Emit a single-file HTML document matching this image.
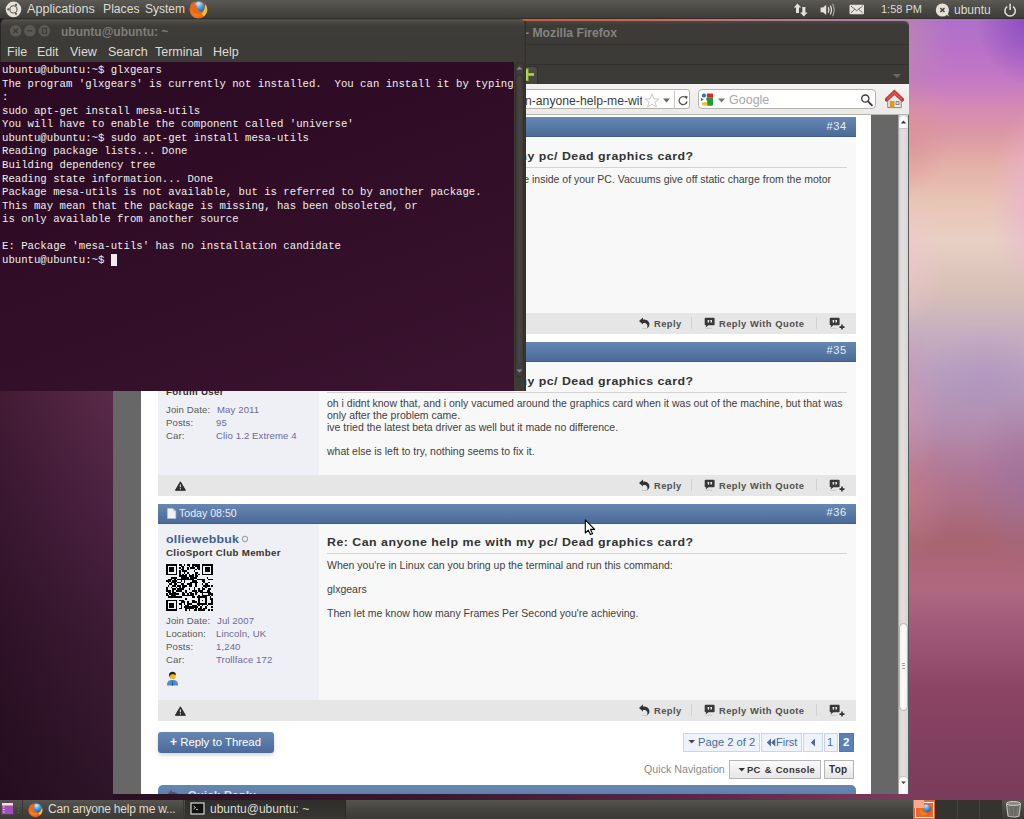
<!DOCTYPE html>
<html><head><meta charset="utf-8">
<style>
*{margin:0;padding:0;box-sizing:border-box}
html,body{width:1024px;height:819px;overflow:hidden}
body{position:relative;font-family:"Liberation Sans",sans-serif;background:#7a3a5c}
.a{position:absolute;white-space:nowrap}
#wall{left:0;top:0;width:1024px;height:819px;
background:
 radial-gradient(ellipse 55px 70px at 1030px 15px, rgba(128,64,190,.8), rgba(128,64,190,0) 100%),
 radial-gradient(ellipse 45px 70px at 905px 45px, rgba(190,134,178,.85), rgba(190,134,178,0) 100%),
 radial-gradient(ellipse 45px 60px at 905px 135px, rgba(218,146,150,.7), rgba(222,150,150,0) 100%),
 radial-gradient(ellipse 40px 90px at 1030px 200px, rgba(234,176,212,.75), rgba(234,176,212,0) 100%),
 radial-gradient(ellipse 40px 70px at 905px 260px, rgba(240,196,208,.6), rgba(240,196,208,0) 100%),
 radial-gradient(ellipse 70px 60px at 985px 385px, rgba(170,140,190,.4), rgba(170,140,190,0) 100%),
 radial-gradient(ellipse 40px 80px at 905px 400px, rgba(210,150,176,.6), rgba(210,150,176,0) 100%),
 radial-gradient(ellipse 60px 90px at 1030px 480px, rgba(152,112,160,.6), rgba(152,112,160,0) 100%),
 radial-gradient(ellipse 50px 70px at 905px 490px, rgba(198,128,136,.6), rgba(198,128,136,0) 100%),
 linear-gradient(180deg,#b070c8 20px,#b872c8 50px,#c478c4 80px,#d488b4 105px,#dc98a4 135px,#e4b0a8 165px,#e8c4b4 200px,#e8d0c4 240px,#d8c0b8 290px,#c8b0c0 330px,#b8a0c0 375px,#b490b0 420px,#b07898 470px,#a86470 540px,#b06880 590px,#a05a78 630px,#8c4464 690px,#7e3e5e 760px,#7a3c5c 800px);
}
#wallL{left:0;top:385px;width:113px;height:415px;background:linear-gradient(90deg,rgba(20,0,14,.35),rgba(20,0,14,0)),linear-gradient(180deg,#5c2a4a 0%,#4c2242 30%,#3c1a34 60%,#2e1428 100%)}
#wallB{left:113px;top:790px;width:796px;height:10px;background:linear-gradient(90deg,#2a1024,#3a1830 40%,#5a2a48 75%,#7a3c5c)}
#toppanel{left:0;top:0;width:1024px;height:18px;box-shadow:0 1px 0 #302f2b;background:linear-gradient(#5a5954,#4a4944 50%,#3d3c38);color:#dfdbd2;font-size:12.6px}
#botpanel{left:0;top:800px;width:1024px;height:19px;background:linear-gradient(#55544f,#45443f 50%,#3a3935);color:#dfdbd2;font-size:12.5px}
.pt{position:absolute;top:2px;white-space:nowrap}
/* firefox */
#ff{left:113px;top:21px;width:796px;height:773px;background:linear-gradient(#4a4944,#3c3b37 4px);border-radius:5px 5px 0 0;overflow:hidden}
#clip{left:0;top:0;width:1024px;height:819px;clip-path:inset(115px 115px 25px 113px)}
.ph{height:20px;background:linear-gradient(#6787b3,#4b6a99);border-bottom:1px solid #3f5d8a}
.pnum{color:#e8eef6;font-size:11px;letter-spacing:.6px}
.ttl{font-weight:bold;font-size:11.3px;color:#333;letter-spacing:.45px;word-spacing:0;transform:scaleX(1.094);transform-origin:0 0}
.txt{font-size:10.5px;color:#404040;line-height:12px}
.ft{height:21px;background:#e6e6e6}
.fb{font-weight:bold;font-size:9.4px;color:#505050;letter-spacing:.4px;word-spacing:.5px}
.lbl{font-size:9.6px;color:#5a5a5a;letter-spacing:.1px}
.val{font-size:9.6px;color:#6a6a9a;letter-spacing:.1px}
/* terminal */
#term{left:0;top:19px;width:525px;height:372px;background:transparent;overflow:hidden}
#termc{left:0;top:43px;width:514px;height:329px;background:linear-gradient(160deg,#2c0a22 0%,#300c26 40%,#3a1430 100%);color:#eeeeec;font-family:"Liberation Mono",monospace;font-size:10.67px;line-height:13.57px;white-space:pre;padding:2px 0 0 2px}
</style></head><body>
<div id="wall" class="a"></div>
<div id="wallL" class="a"></div>
<div id="wallB" class="a"></div>
<div class="a" style="left:0;top:18px;width:12px;height:12px;background:#2c0c26"></div>
<div class="a" style="left:500px;top:18px;width:415px;height:4px;background:linear-gradient(90deg,#c85a3a,#c8684a 30%,#b87890 70%,#b480a8)"></div>

<div id="ff" class="a">
  <div class="a" style="left:0;top:23px;width:796px;height:1px;background:#33322e"></div>
  <div class="a" style="left:0;top:43px;width:796px;height:1px;background:#33322e"></div>
  <div class="a" style="left:412px;top:5px;font-weight:bold;font-size:12.2px;color:#85837d">- Mozilla Firefox</div>
  <div class="a" style="left:0;top:63px;width:796px;height:31px;background:linear-gradient(#f4f3f1,#eceae7);border-bottom:1px solid #b9b7b1"></div>
  <div class="a" style="left:400px;top:44.5px;width:25px;height:18px;border-radius:4px 4px 0 0;background:linear-gradient(#4e4d48,#45443f);border:1px solid #32312d;border-bottom:0"></div>
  <svg class="a" style="left:412px;top:47px" width="12" height="14" viewBox="0 0 12 14"><path d="M0.5 0.5 H3.5 V5 H9 V8 H3.5 V13 H0.5 Z" fill="#8fbf2a"/><path d="M1.2 1.5 H2.5 V12 H1.2Z" fill="#c4e46a"/><path d="M3.5 5.8 H8.5 V6.8 H3.5Z" fill="#c4e46a"/></svg>
  <svg class="a" style="left:779px;top:51px" width="10" height="8" viewBox="0 0 10 8"><path d="M1 2 H9 L5 6Z" fill="#6a6965"/></svg>
  <!-- url bar -->
  <div class="a" style="left:380px;top:68.4px;width:197px;height:19.4px;background:#fff;border:1px solid #b4b2ac;border-radius:3px"></div>
  <div class="a" style="left:561px;top:69.5px;width:1px;height:18px;background:#c8c6c0"></div>
  <div class="a" style="left:412px;top:73px;width:117px;overflow:hidden;font-size:12.2px;color:#3c3c3c">n-anyone-help-me-with-</div>
  <svg class="a" style="left:531px;top:72px" width="16" height="15" viewBox="0 0 16 15"><path d="M8 1 L10 5.8 L15 6 L11.1 9.2 L12.4 14 L8 11.3 L3.6 14 L4.9 9.2 L1 6 L6 5.8Z" fill="#fff" stroke="#c9c9c9" stroke-width="1"/></svg>
  <svg class="a" style="left:549px;top:76px" width="9" height="7" viewBox="0 0 9 7"><path d="M1 1.5 H8 L4.5 5.5Z" fill="#666"/></svg>
  <svg class="a" style="left:564px;top:73px" width="12" height="13" viewBox="0 0 12 13"><path d="M9.3 4.2 A4 4 0 1 0 10 7.5" fill="none" stroke="#5a5650" stroke-width="1.3"/><path d="M7.4 1.8 L10.6 2.2 L9.9 5.6Z" fill="#5a5650"/></svg>
  <!-- search -->
  <div class="a" style="left:585px;top:68.4px;width:178px;height:19.4px;background:#fff;border:1px solid #b4b2ac;border-radius:4px"></div>
  <svg class="a" style="left:587px;top:71px" width="16" height="16" viewBox="0 0 16 16">
    <ellipse cx="4" cy="3.6" rx="2.2" ry="2" fill="#2f6fd6"/><path d="M1 5.8 L3.8 7.4 L1 9Z" fill="#2f6fd6"/><ellipse cx="4.7" cy="11.8" rx="2.9" ry="1.9" fill="#f4c020"/>
    <path d="M7 1.6 H12.4 Q13 1.6 13 2.2 V5.8 H7Z" fill="#e0261c"/><path d="M6.2 5.8 H13 V12.6 Q13 13.8 11.8 13.8 H7.2 V10 Q7.2 8 6.2 7.4Z" fill="#1f9a3a"/>
  </svg>
  <svg class="a" style="left:604px;top:76px" width="9" height="7" viewBox="0 0 9 7"><path d="M1 1.5 H8 L4.5 5.5Z" fill="#777"/></svg>
  <div class="a" style="left:616px;top:72px;font-size:12.5px;color:#a8a8a8">Google</div>
  <svg class="a" style="left:747px;top:72px" width="14" height="14" viewBox="0 0 14 14"><circle cx="5.3" cy="5.6" r="3.6" fill="none" stroke="#3a3a3a" stroke-width="1.3"/><path d="M8 8.3 L12 12.3" stroke="#3a3a3a" stroke-width="1.8" stroke-linecap="round"/></svg>
  <!-- home -->
  <svg class="a" style="left:772px;top:68px" width="19" height="20" viewBox="0 0 19 20">
    <path d="M2.7 9.5 V18.6 H16.2 V9.5 L9.45 3.5Z" fill="#ececec" stroke="#858585" stroke-width="1"/>
    <path d="M1.6 10.6 L9.4 3.2 L17.2 10.6" fill="none" stroke="#c43a36" stroke-width="4" stroke-linecap="round"/>
    <path d="M2.4 10 L9.4 3.6 L16.4 10" fill="none" stroke="#de5a54" stroke-width="1.4" stroke-linecap="round"/>
    <rect x="4.8" y="12" width="4.7" height="6.6" fill="#d89a20"/>
    <rect x="11" y="12.6" width="3" height="3" fill="#c4e2ea" stroke="#6e6e6e" stroke-width=".8"/>
  </svg>
</div>

<div id="clip" class="a">
  <div class="a" style="left:113px;top:115px;width:785px;height:679px;background:#676767"></div>
  <div class="a" style="left:141px;top:115px;width:730px;height:679px;background:#fff"></div>
  <div class="a ph" style="left:158px;top:117px;width:698px"></div>
  <div class="a pnum" style="left:826.5px;top:120px">#34</div>
  <div class="a" style="left:158px;top:137px;width:161px;height:176px;background:#eff0f5"></div>
  <div class="a" style="left:319px;top:137px;width:537px;height:176px;background:#f8f8f8"></div>
  <div class="a ttl" style="left:327px;top:150px">Re: Can anyone help me with my pc/ Dead graphics card?</div>
  <div class="a" style="left:327px;top:167px;width:520px;height:1px;background:#d4d4d4"></div>
  <div class="a txt" style="right:193px;top:172.5px">e inside of your PC. Vacuums give off static charge from the motor</div>
  <div class="a ft" style="left:158px;top:313px;width:698px"></div>
  <svg class="a" style="left:175px;top:319px" width="12" height="11" viewBox="0 0 12 11"><path d="M5.4 0.8 L10.4 9.3 H0.4Z" fill="#2e2e2e" stroke="#2e2e2e" stroke-width="1" stroke-linejoin="round"/><path d="M5.4 3.4 V6.2 M5.4 7.2 V8.4" stroke="#e6e6e6" stroke-width="1.1"/></svg>
  <svg class="a" style="left:638px;top:317px" width="13" height="12" viewBox="0 0 13 12"><path d="M1 4 L5 0.6 V2.6 C9 2.4 11.8 4.6 11.4 8 C11.2 9.6 10.2 10.8 8.6 11.4 C9.6 10 9.8 8.6 9 7.4 C8.2 6.2 6.8 5.8 5 6 V7.6Z" fill="#333"/><path d="M4 11.5 H9" stroke="#bbb" stroke-width=".8"/></svg>
  <div class="a fb" style="left:654px;top:318px">Reply</div>
  <div class="a" style="left:691px;top:317px;width:1px;height:12px;background:#d2d2d2"></div>
  <svg class="a" style="left:704px;top:317px" width="12" height="12" viewBox="0 0 12 12"><path d="M1.5 0.8 H9.8 Q10.6 0.8 10.6 1.6 V7.4 Q10.6 8.2 9.8 8.2 H4.4 L1.6 10.6 L2.2 8.2 H1.5 Q0.7 8.2 0.7 7.4 V1.6 Q0.7 0.8 1.5 0.8Z" fill="#383838"/><path d="M3.6 3 h1.6 v1.8 l-1 1.2 h-.6 l.6-1.2 h-.6z M6.4 3 h1.6 v1.8 l-1 1.2 h-.6 l.6-1.2 h-.6z" fill="#eee"/><path d="M1.5 11.3 H8" stroke="#c4c4c4" stroke-width=".8"/></svg>
  <div class="a fb" style="left:719px;top:318px;">Reply With Quote</div>
  <div class="a" style="left:816px;top:317px;width:1px;height:12px;background:#d2d2d2"></div>
  <svg class="a" style="left:829px;top:317px" width="17" height="13" viewBox="0 0 17 13"><path d="M1.5 0.8 H9.8 Q10.6 0.8 10.6 1.6 V7.4 Q10.6 8.2 9.8 8.2 H4.4 L1.6 10.6 L2.2 8.2 H1.5 Q0.7 8.2 0.7 7.4 V1.6 Q0.7 0.8 1.5 0.8Z" fill="#383838"/><path d="M3.6 3 h1.6 v1.8 l-1 1.2 h-.6 l.6-1.2 h-.6z M6.4 3 h1.6 v1.8 l-1 1.2 h-.6 l.6-1.2 h-.6z" fill="#eee"/><path d="M1.5 11.3 H8" stroke="#c4c4c4" stroke-width=".8"/><path d="M13 7.6 V12.6 M10.5 10.1 H15.5" stroke="#333" stroke-width="1.6"/></svg>
  <div class="a ph" style="left:158px;top:342px;width:698px"></div>
  <div class="a pnum" style="left:826.5px;top:344px">#35</div>
  <div class="a" style="left:158px;top:362px;width:161px;height:113px;background:#eff0f5"></div>
  <div class="a" style="left:319px;top:362px;width:537px;height:113px;background:#f8f8f8"></div>
  <div class="a ttl" style="left:327px;top:375px">Re: Can anyone help me with my pc/ Dead graphics card?</div>
  <div class="a" style="left:327px;top:392px;width:520px;height:1px;background:#d4d4d4"></div>
  <div class="a" style="left:166px;top:386.5px;font-weight:bold;font-size:8.8px;letter-spacing:.3px;transform:scaleX(1.105);transform-origin:0 0;color:#3a3226">Forum User</div>
  <div class="a lbl" style="left:166px;top:404px">Join Date:</div><div class="a val" style="left:217px;top:404px">May 2011</div>
  <div class="a lbl" style="left:166px;top:417px">Posts:</div><div class="a val" style="left:216px;top:417px">95</div>
  <div class="a lbl" style="left:166px;top:430px">Car:</div><div class="a val" style="left:216px;top:430px">Clio 1.2 Extreme 4</div>
  <div class="a txt" style="left:327px;top:397px">oh i didnt know that, and i only vacumed around the graphics card when it was out of the machine, but that was<br>only after the problem came.<br>ive tried the latest beta driver as well but it made no difference.<br><br>what else is left to try, nothing seems to fix it.</div>
  <div class="a ft" style="left:158px;top:475px;width:698px"></div>
  <svg class="a" style="left:175px;top:481px" width="12" height="11" viewBox="0 0 12 11"><path d="M5.4 0.8 L10.4 9.3 H0.4Z" fill="#2e2e2e" stroke="#2e2e2e" stroke-width="1" stroke-linejoin="round"/><path d="M5.4 3.4 V6.2 M5.4 7.2 V8.4" stroke="#e6e6e6" stroke-width="1.1"/></svg>
  <svg class="a" style="left:638px;top:479px" width="13" height="12" viewBox="0 0 13 12"><path d="M1 4 L5 0.6 V2.6 C9 2.4 11.8 4.6 11.4 8 C11.2 9.6 10.2 10.8 8.6 11.4 C9.6 10 9.8 8.6 9 7.4 C8.2 6.2 6.8 5.8 5 6 V7.6Z" fill="#333"/><path d="M4 11.5 H9" stroke="#bbb" stroke-width=".8"/></svg>
  <div class="a fb" style="left:654px;top:480px">Reply</div>
  <div class="a" style="left:691px;top:479px;width:1px;height:12px;background:#d2d2d2"></div>
  <svg class="a" style="left:704px;top:479px" width="12" height="12" viewBox="0 0 12 12"><path d="M1.5 0.8 H9.8 Q10.6 0.8 10.6 1.6 V7.4 Q10.6 8.2 9.8 8.2 H4.4 L1.6 10.6 L2.2 8.2 H1.5 Q0.7 8.2 0.7 7.4 V1.6 Q0.7 0.8 1.5 0.8Z" fill="#383838"/><path d="M3.6 3 h1.6 v1.8 l-1 1.2 h-.6 l.6-1.2 h-.6z M6.4 3 h1.6 v1.8 l-1 1.2 h-.6 l.6-1.2 h-.6z" fill="#eee"/><path d="M1.5 11.3 H8" stroke="#c4c4c4" stroke-width=".8"/></svg>
  <div class="a fb" style="left:719px;top:480px;">Reply With Quote</div>
  <div class="a" style="left:816px;top:479px;width:1px;height:12px;background:#d2d2d2"></div>
  <svg class="a" style="left:829px;top:479px" width="17" height="13" viewBox="0 0 17 13"><path d="M1.5 0.8 H9.8 Q10.6 0.8 10.6 1.6 V7.4 Q10.6 8.2 9.8 8.2 H4.4 L1.6 10.6 L2.2 8.2 H1.5 Q0.7 8.2 0.7 7.4 V1.6 Q0.7 0.8 1.5 0.8Z" fill="#383838"/><path d="M3.6 3 h1.6 v1.8 l-1 1.2 h-.6 l.6-1.2 h-.6z M6.4 3 h1.6 v1.8 l-1 1.2 h-.6 l.6-1.2 h-.6z" fill="#eee"/><path d="M1.5 11.3 H8" stroke="#c4c4c4" stroke-width=".8"/><path d="M13 7.6 V12.6 M10.5 10.1 H15.5" stroke="#333" stroke-width="1.6"/></svg>
  <div class="a ph" style="left:158px;top:504px;width:698px"></div>
  <div class="a pnum" style="left:826.5px;top:506px">#36</div>
  <div class="a" style="left:158px;top:524px;width:161px;height:176px;background:#eff0f5"></div>
  <div class="a" style="left:319px;top:524px;width:537px;height:176px;background:#f8f8f8"></div>
  <div class="a ttl" style="left:327px;top:536px">Re: Can anyone help me with my pc/ Dead graphics card?</div>
  <div class="a" style="left:327px;top:553px;width:520px;height:1px;background:#d4d4d4"></div>
  <svg class="a" style="left:167px;top:508px" width="10" height="11" viewBox="0 0 10 11"><path d="M0.5 0.5 H6 L8.8 3.3 V10.5 H0.5Z" fill="#eef2f8" stroke="#b8c8dc" stroke-width=".6"/><path d="M6 0.5 V3.3 H8.8Z" fill="#b8c8dc"/></svg>
  <div class="a pnum" style="left:179px;top:507px;font-size:10.6px;letter-spacing:0">Today 08:50</div>
  <div class="a" style="left:166px;top:533px;font-size:11.5px;font-weight:bold;letter-spacing:.2px;transform:scaleX(1.075);transform-origin:0 0;color:#3f5e94">olliewebbuk</div>
  <svg class="a" style="left:241px;top:535px" width="8" height="8" viewBox="0 0 8 8"><circle cx="4" cy="4" r="2.6" fill="none" stroke="#a8a8b0" stroke-width="1.1"/></svg>
  <div class="a" style="left:166px;top:548px;font-weight:bold;font-size:8.8px;letter-spacing:.3px;transform:scaleX(1.105);transform-origin:0 0;color:#3a3226">ClioSport Club Member</div>
  <svg class="a" style="left:166px;top:564px" width="47" height="47" viewBox="0 0 29 29" shape-rendering="crispEdges"><path d="M0 0h7v1h-7zM8 0h2v1h-2zM11 0h1v1h-1zM13 0h2v1h-2zM16 0h5v1h-5zM22 0h7v1h-7zM0 1h1v1h-1zM6 1h1v1h-1zM9 1h2v1h-2zM14 1h1v1h-1zM16 1h1v1h-1zM18 1h3v1h-3zM22 1h1v1h-1zM28 1h1v1h-1zM0 2h1v1h-1zM2 2h3v1h-3zM6 2h1v1h-1zM8 2h1v1h-1zM10 2h1v1h-1zM13 2h1v1h-1zM15 2h3v1h-3zM19 2h2v1h-2zM22 2h1v1h-1zM24 2h3v1h-3zM28 2h1v1h-1zM0 3h1v1h-1zM2 3h3v1h-3zM6 3h1v1h-1zM9 3h2v1h-2zM13 3h1v1h-1zM18 3h1v1h-1zM20 3h1v1h-1zM22 3h1v1h-1zM24 3h3v1h-3zM28 3h1v1h-1zM0 4h1v1h-1zM2 4h3v1h-3zM6 4h1v1h-1zM8 4h1v1h-1zM10 4h3v1h-3zM17 4h1v1h-1zM22 4h1v1h-1zM24 4h3v1h-3zM28 4h1v1h-1zM0 5h1v1h-1zM6 5h1v1h-1zM8 5h1v1h-1zM11 5h1v1h-1zM13 5h1v1h-1zM18 5h2v1h-2zM22 5h1v1h-1zM28 5h1v1h-1zM0 6h7v1h-7zM8 6h1v1h-1zM10 6h1v1h-1zM12 6h1v1h-1zM14 6h1v1h-1zM16 6h1v1h-1zM18 6h1v1h-1zM20 6h1v1h-1zM22 6h7v1h-7zM8 7h5v1h-5zM14 7h3v1h-3zM18 7h2v1h-2zM3 8h4v1h-4zM9 8h5v1h-5zM15 8h4v1h-4zM25 8h1v1h-1zM1 9h3v1h-3zM5 9h1v1h-1zM7 9h10v1h-10zM19 9h5v1h-5zM26 9h3v1h-3zM0 10h3v1h-3zM4 10h3v1h-3zM9 10h1v1h-1zM11 10h1v1h-1zM16 10h3v1h-3zM22 10h2v1h-2zM1 11h1v1h-1zM3 11h3v1h-3zM7 11h2v1h-2zM11 11h1v1h-1zM15 11h5v1h-5zM23 11h1v1h-1zM26 11h1v1h-1zM2 12h2v1h-2zM5 12h2v1h-2zM9 12h2v1h-2zM13 12h3v1h-3zM18 12h1v1h-1zM22 12h1v1h-1zM24 12h2v1h-2zM1 13h1v1h-1zM4 13h2v1h-2zM7 13h2v1h-2zM10 13h3v1h-3zM14 13h2v1h-2zM18 13h1v1h-1zM23 13h4v1h-4zM28 13h1v1h-1zM0 14h1v1h-1zM3 14h1v1h-1zM6 14h1v1h-1zM8 14h1v1h-1zM10 14h2v1h-2zM17 14h1v1h-1zM22 14h1v1h-1zM24 14h1v1h-1zM0 15h1v1h-1zM4 15h2v1h-2zM7 15h4v1h-4zM14 15h1v1h-1zM17 15h1v1h-1zM20 15h1v1h-1zM22 15h2v1h-2zM26 15h2v1h-2zM0 16h3v1h-3zM4 16h1v1h-1zM6 16h4v1h-4zM12 16h1v1h-1zM16 16h3v1h-3zM20 16h3v1h-3zM25 16h2v1h-2zM1 17h2v1h-2zM4 17h2v1h-2zM10 17h1v1h-1zM12 17h1v1h-1zM14 17h2v1h-2zM18 17h2v1h-2zM21 17h7v1h-7zM0 18h1v1h-1zM2 18h6v1h-6zM10 18h2v1h-2zM13 18h1v1h-1zM15 18h2v1h-2zM18 18h1v1h-1zM22 18h1v1h-1zM26 18h3v1h-3zM0 19h2v1h-2zM3 19h3v1h-3zM10 19h7v1h-7zM20 19h1v1h-1zM22 19h5v1h-5zM28 19h1v1h-1zM1 20h9v1h-9zM16 20h2v1h-2zM19 20h6v1h-6zM27 20h1v1h-1zM12 21h1v1h-1zM20 21h1v1h-1zM24 21h1v1h-1zM27 21h2v1h-2zM0 22h7v1h-7zM8 22h3v1h-3zM16 22h2v1h-2zM20 22h1v1h-1zM22 22h1v1h-1zM24 22h1v1h-1zM28 22h1v1h-1zM0 23h1v1h-1zM6 23h1v1h-1zM9 23h3v1h-3zM13 23h1v1h-1zM16 23h3v1h-3zM20 23h1v1h-1zM24 23h1v1h-1zM28 23h1v1h-1zM0 24h1v1h-1zM2 24h3v1h-3zM6 24h1v1h-1zM8 24h2v1h-2zM11 24h1v1h-1zM13 24h3v1h-3zM19 24h6v1h-6zM26 24h3v1h-3zM0 25h1v1h-1zM2 25h3v1h-3zM6 25h1v1h-1zM9 25h1v1h-1zM12 25h2v1h-2zM16 25h3v1h-3zM20 25h1v1h-1zM22 25h1v1h-1zM25 25h1v1h-1zM0 26h1v1h-1zM2 26h3v1h-3zM6 26h1v1h-1zM9 26h1v1h-1zM11 26h9v1h-9zM21 26h1v1h-1zM24 26h1v1h-1zM28 26h1v1h-1zM0 27h1v1h-1zM6 27h1v1h-1zM8 27h2v1h-2zM12 27h5v1h-5zM18 27h1v1h-1zM20 27h2v1h-2zM23 27h2v1h-2zM0 28h7v1h-7zM12 28h1v1h-1zM14 28h1v1h-1zM17 28h2v1h-2zM20 28h4v1h-4zM26 28h1v1h-1zM28 28h1v1h-1z" fill="#000"/></svg>
  <div class="a lbl" style="left:166px;top:615px">Join Date:</div><div class="a val" style="left:217px;top:615px">Jul 2007</div>
  <div class="a lbl" style="left:166px;top:628px">Location:</div><div class="a val" style="left:216px;top:628px">Lincoln, UK</div>
  <div class="a lbl" style="left:166px;top:641px">Posts:</div><div class="a val" style="left:216px;top:641px">1,240</div>
  <div class="a lbl" style="left:166px;top:654px">Car:</div><div class="a val" style="left:216px;top:654px">Trollface 172</div>
  <svg class="a" style="left:166px;top:671px" width="13" height="15" viewBox="0 0 13 15"><path d="M1 14.5 C1 10 3 9 6.5 9 C10 9 12 10 12 14.5Z" fill="#4a8ad8"/><path d="M6.5 9.5 L5.8 14.5 H7.2Z" fill="#1a3a6a"/><circle cx="6.5" cy="5" r="3.3" fill="#f0b820"/><path d="M3 4.5 C3 1.5 5 0.8 6.5 0.8 C9 0.8 10 2.5 10 4 C9 3 7 3.2 5 3.5 C4.2 4 3.8 5 3.8 6Z" fill="#222"/></svg>
  <div class="a txt" style="left:327px;top:558.5px">When you're in Linux can you bring up the terminal and run this command:<br><br>glxgears<br><br>Then let me know how many Frames Per Second you're achieving.</div>
  <div class="a ft" style="left:158px;top:700px;width:698px"></div>
  <svg class="a" style="left:175px;top:706px" width="12" height="11" viewBox="0 0 12 11"><path d="M5.4 0.8 L10.4 9.3 H0.4Z" fill="#2e2e2e" stroke="#2e2e2e" stroke-width="1" stroke-linejoin="round"/><path d="M5.4 3.4 V6.2 M5.4 7.2 V8.4" stroke="#e6e6e6" stroke-width="1.1"/></svg>
  <svg class="a" style="left:638px;top:704px" width="13" height="12" viewBox="0 0 13 12"><path d="M1 4 L5 0.6 V2.6 C9 2.4 11.8 4.6 11.4 8 C11.2 9.6 10.2 10.8 8.6 11.4 C9.6 10 9.8 8.6 9 7.4 C8.2 6.2 6.8 5.8 5 6 V7.6Z" fill="#333"/><path d="M4 11.5 H9" stroke="#bbb" stroke-width=".8"/></svg>
  <div class="a fb" style="left:654px;top:705px">Reply</div>
  <div class="a" style="left:691px;top:704px;width:1px;height:12px;background:#d2d2d2"></div>
  <svg class="a" style="left:704px;top:704px" width="12" height="12" viewBox="0 0 12 12"><path d="M1.5 0.8 H9.8 Q10.6 0.8 10.6 1.6 V7.4 Q10.6 8.2 9.8 8.2 H4.4 L1.6 10.6 L2.2 8.2 H1.5 Q0.7 8.2 0.7 7.4 V1.6 Q0.7 0.8 1.5 0.8Z" fill="#383838"/><path d="M3.6 3 h1.6 v1.8 l-1 1.2 h-.6 l.6-1.2 h-.6z M6.4 3 h1.6 v1.8 l-1 1.2 h-.6 l.6-1.2 h-.6z" fill="#eee"/><path d="M1.5 11.3 H8" stroke="#c4c4c4" stroke-width=".8"/></svg>
  <div class="a fb" style="left:719px;top:705px;">Reply With Quote</div>
  <div class="a" style="left:816px;top:704px;width:1px;height:12px;background:#d2d2d2"></div>
  <svg class="a" style="left:829px;top:704px" width="17" height="13" viewBox="0 0 17 13"><path d="M1.5 0.8 H9.8 Q10.6 0.8 10.6 1.6 V7.4 Q10.6 8.2 9.8 8.2 H4.4 L1.6 10.6 L2.2 8.2 H1.5 Q0.7 8.2 0.7 7.4 V1.6 Q0.7 0.8 1.5 0.8Z" fill="#383838"/><path d="M3.6 3 h1.6 v1.8 l-1 1.2 h-.6 l.6-1.2 h-.6z M6.4 3 h1.6 v1.8 l-1 1.2 h-.6 l.6-1.2 h-.6z" fill="#eee"/><path d="M1.5 11.3 H8" stroke="#c4c4c4" stroke-width=".8"/><path d="M13 7.6 V12.6 M10.5 10.1 H15.5" stroke="#333" stroke-width="1.6"/></svg>

  <!-- bottom -->
  <div class="a" style="left:158px;top:732px;width:116px;height:21px;border-radius:3px;background:linear-gradient(#6787b3,#4b6a99);box-shadow:0 2px 4px rgba(0,0,0,.18);color:#fff;font-size:11.4px;padding:3px 0 0 12px;line-height:14px"><b style="font-size:12px">+</b> Reply to Thread</div>
  <!-- pagination -->
  <div class="a" style="left:683px;top:733px;width:77px;height:19px;background:#eef2fb;border:1px solid #c9d3ea"></div>
  <svg class="a" style="left:688px;top:739px" width="8" height="6" viewBox="0 0 8 6"><path d="M0.5 1 H7 L3.75 4.6Z" fill="#444"/></svg>
  <div class="a" style="left:698px;top:736px;font-size:11.2px;color:#4a6a98">Page 2 of 2</div>
  <div class="a" style="left:761px;top:733px;width:41px;height:19px;background:#eef2fb;border:1px solid #c9d3ea"></div>
  <svg class="a" style="left:766px;top:738px" width="10" height="9" viewBox="0 0 10 9"><path d="M5 0.5 V8.5 L0.8 4.5Z M9.3 0.5 V8.5 L5.1 4.5Z" fill="#4a6a98"/></svg>
  <div class="a" style="left:776px;top:736px;font-size:11px;color:#4a6a98">First</div>
  <div class="a" style="left:803px;top:733px;width:20px;height:19px;background:#eef2fb;border:1px solid #c9d3ea"></div>
  <svg class="a" style="left:810px;top:738px" width="6" height="9" viewBox="0 0 6 9"><path d="M5 0.5 V8.5 L0.8 4.5Z" fill="#4a6a98"/></svg>
  <div class="a" style="left:824px;top:733px;width:14px;height:19px;background:#eef2fb;border:1px solid #c9d3ea"></div>
  <div class="a" style="left:827px;top:736px;font-size:11px;color:#4a6a98">1</div>
  <div class="a" style="left:839px;top:733px;width:15px;height:19px;background:#5a80b9;border:1px solid #5077b0"></div>
  <div class="a" style="left:843px;top:735.5px;font-size:11.5px;font-weight:bold;color:#fff">2</div>
  <!-- quick nav -->
  <div class="a" style="left:644px;top:763px;font-size:10.7px;color:#8a8a8a">Quick Navigation</div>
  <div class="a" style="left:729px;top:760px;width:92px;height:19px;background:linear-gradient(#fafafa,#e6e6e6);border:1px solid #b5b5b5"></div>
  <svg class="a" style="left:738px;top:767px" width="8" height="6" viewBox="0 0 8 6"><path d="M0.5 1 H7 L3.75 4.6Z" fill="#333"/></svg>
  <div class="a" style="left:747px;top:764px;font-size:9.4px;letter-spacing:.35px;word-spacing:1px;font-weight:bold;color:#333">PC &amp; Console</div>
  <div class="a" style="left:824px;top:760px;width:30px;height:19px;background:linear-gradient(#fafafa,#e6e6e6);border:1px solid #b5b5b5"></div>
  <div class="a" style="left:829px;top:764px;font-size:10px;letter-spacing:.3px;font-weight:bold;color:#333">Top</div>
  <!-- quick reply -->
  <div class="a" style="left:158px;top:785px;width:698px;height:20px;border-radius:5px 5px 0 0;background:linear-gradient(#6787b3,#5676a5)"></div>
  <svg class="a" style="left:167px;top:789px" width="13" height="8" viewBox="0 0 13 8"><path d="M0.5 5 L5 0.8 V3 C8.5 3 11.5 4.5 12.5 8 H0.5Z" fill="#4e5663"/></svg>
  <div class="a" style="left:188px;top:788.5px;font-size:11px;font-weight:bold;letter-spacing:.4px;color:#dde5ef">Quick Reply</div>
  <!-- scrollbar -->
  <div class="a" style="left:898px;top:115px;width:11px;height:679px;background:linear-gradient(90deg,#d4d2cf,#e2e0de 40%,#d8d6d3);border-left:1px solid #a9a7a4;border-right:1px solid #5c5a57"></div>
  <div class="a" style="left:899px;top:116px;width:9px;height:13px;border-radius:5px 5px 2px 2px;background:linear-gradient(90deg,#f2f2f1,#fdfdfd 50%,#efefee);border-bottom:1px solid #c8c6c3"></div>
  <svg class="a" style="left:899px;top:118px" width="9" height="8" viewBox="0 0 9 8"><path d="M1.8 5.5 H7.2 L4.5 2.5Z" fill="#3a3a3a"/></svg>
  <div class="a" style="left:899px;top:623px;width:9px;height:88px;border-radius:5px;background:linear-gradient(90deg,#f2f2f1,#fdfdfd 50%,#efefee);border:1px solid #b3b1ae"></div>
  <div class="a" style="left:902px;top:663px;width:3px;height:6px;border-top:1px solid #a0a0a0;border-bottom:1px solid #a0a0a0"></div>
  <div class="a" style="left:902px;top:665px;width:3px;height:1px;background:#a0a0a0"></div>
  <div class="a" style="left:899px;top:776px;width:9px;height:18px;border-radius:5px 5px 0 0;background:linear-gradient(90deg,#f2f2f1,#fdfdfd 50%,#efefee);border-top:1px solid #c8c6c3"></div>
  <svg class="a" style="left:899px;top:780px" width="9" height="8" viewBox="0 0 9 8"><path d="M2.2 1.5 H6.8 L4.5 4Z" fill="#3a3a3a"/></svg>
</div>

<svg class="a" style="left:584px;top:519px;z-index:50" width="12" height="17" viewBox="0 0 12 17"><path d="M1.3 0.8 V14 L4.3 11.2 L6.4 15.6 L8.6 14.7 L6.5 10.4 H10.6 Z" fill="#fff" stroke="#000" stroke-width="1.1" stroke-linejoin="round"/></svg>

<div id="term" class="a">
  <div class="a" style="left:0;top:0;width:525px;height:23px;border-radius:5px 5px 0 0;background:linear-gradient(#3c3b37,#53524d 1px,#4a4944 3px,#3e3d39 7px,#3c3b37);border-left:1px solid #2a2927"></div>
  <svg class="a" style="left:0;top:0" width="60" height="23" viewBox="0 0 60 23">
    <circle cx="15.6" cy="11.8" r="5.8" fill="#5a5955"/><circle cx="29.9" cy="11.8" r="5.8" fill="#5a5955"/><circle cx="44.4" cy="11.8" r="5.8" fill="#5a5955"/>
    <path d="M13.4 9.6 L17.8 14 M17.8 9.6 L13.4 14" stroke="#3a3935" stroke-width="1.2"/>
    <path d="M27.5 11.8 H32.3" stroke="#3a3935" stroke-width="1.2"/>
    <rect x="42.4" y="9.3" width="4" height="5" fill="none" stroke="#3a3935" stroke-width="1"/>
  </svg>
  <div class="a" style="left:61px;top:6px;font-weight:bold;font-size:12px;color:#7f7d78">ubuntu@ubuntu: ~</div>
  <div class="a" style="left:0;top:23px;width:525px;height:20px;background:#3c3b37;border-left:1px solid #2a2927;color:#dfdbd2;font-size:12.5px;word-spacing:0">
    <span class="a" style="left:6px;top:3px">File</span><span class="a" style="left:36px;top:3px">Edit</span><span class="a" style="left:69px;top:3px">View</span><span class="a" style="left:107px;top:3px">Search</span><span class="a" style="left:154px;top:3px">Terminal</span><span class="a" style="left:212px;top:3px">Help</span>
  </div>
  <div id="termc" class="a">ubuntu@ubuntu:~$ glxgears
The program 'glxgears' is currently not installed.  You can install it by typing
:
sudo apt-get install mesa-utils
You will have to enable the component called 'universe'
ubuntu@ubuntu:~$ sudo apt-get install mesa-utils
Reading package lists... Done
Building dependency tree
Reading state information... Done
Package mesa-utils is not available, but is referred to by another package.
This may mean that the package is missing, has been obsoleted, or
is only available from another source

E: Package 'mesa-utils' has no installation candidate
ubuntu@ubuntu:~$ <span style="background:#eeeeec">&nbsp;</span></div>
  <div class="a" style="left:514px;top:43px;width:11px;height:329px;background:#3c3b37"></div>
  <div class="a" style="left:515px;top:43px;width:9px;height:12px;border-radius:5px 5px 0 0;background:#3f3e3a;border:1px solid #33322f;border-bottom:0"></div>
  <svg class="a" style="left:515px;top:46px" width="9" height="6" viewBox="0 0 9 6"><path d="M1.5 4.5 H7.5 L4.5 1.5Z" fill="#8a8984"/></svg>
  <div class="a" style="left:515px;top:55px;width:9px;height:292px;border-radius:5px;background:linear-gradient(90deg,#3a3935,#46453f 50%,#3c3b37);border:1px solid #302f2c"></div>
  <div class="a" style="left:515px;top:345px;width:9px;height:13px;border-radius:0 0 5px 5px;background:#3f3e3a;border:1px solid #33322f;border-top:0"></div>
  <svg class="a" style="left:515px;top:349px" width="9" height="6" viewBox="0 0 9 6"><path d="M1.5 1.5 H7.5 L4.5 4.5Z" fill="#8a8984"/></svg>
</div>

<div class="a" style="left:524px;top:21px;width:2px;height:370px;background:linear-gradient(90deg,#3a3935,#2e2d2a)"></div>
<div id="toppanel" class="a">
  <svg class="a" style="left:0;top:0" width="24" height="19" viewBox="0 0 24 19">
    <circle cx="13.5" cy="9.4" r="7.8" fill="#e6e2da"/>
    <circle cx="13.4" cy="9.4" r="3.6" fill="none" stroke="#5a5853" stroke-width="1.1"/>
    <circle cx="8.3" cy="9.4" r="1.15" fill="#5a5853"/><circle cx="16" cy="5" r="1.15" fill="#5a5853"/><circle cx="16" cy="13.8" r="1.15" fill="#5a5853"/>
  </svg>
  <svg class="a" style="left:188px;top:0" width="21" height="19" viewBox="0 0 21 19">
    <defs><radialGradient id="fxo" cx="0.4" cy="0.6" r="0.65"><stop offset="0" stop-color="#f8a020"/><stop offset="0.55" stop-color="#ec6a1c"/><stop offset="1" stop-color="#c8401a"/></radialGradient>
    <radialGradient id="fxb" cx="0.45" cy="0.2" r="0.85"><stop offset="0" stop-color="#c8f0ff"/><stop offset="0.45" stop-color="#4aa0e0"/><stop offset="1" stop-color="#1a4a98"/></radialGradient></defs>
    <circle cx="10.4" cy="9.6" r="8.9" fill="url(#fxo)"/>
    <path d="M17.6 4.5 A8.8 8.8 0 0 1 15.5 16.8 L13.5 13 Z" fill="#f6c030"/>
    <circle cx="11" cy="7.2" r="5.7" fill="url(#fxb)"/>
    <path d="M2.4 5.5 C3.5 2.5 6 1.5 8.2 2.2 C7 3.4 6.6 4.5 6.9 5.6 C8 5 9 5.4 8.8 6.3 C8.6 8.5 9.5 10.4 11.5 11.2 C13.2 11.8 14.8 11.4 16 10.4 C15 13.4 12 14.8 9 14.2 C5 13.4 2 10 2.4 5.5Z" fill="#e8681a"/>
  </svg>
  <span class="pt" style="left:27px">Applications</span>
  <span class="pt" style="left:103px;font-size:12.2px;top:2px">Places</span>
  <span class="pt" style="left:145px;font-size:12px;top:2px">System</span>
  <svg class="a" style="left:790px;top:0" width="50" height="19" viewBox="0 0 50 19">
    <path d="M7.5 3.5 L3.8 7.6 H6 V13 H9 V7.6 H11.2 Z" fill="#e6e2da"/>
    <path d="M13.8 16.5 L17.6 12.4 H15.4 V7 H12.3 V12.4 H10.1 Z" fill="#e6e2da"/>
    <path d="M30.6 7.6 H33 L36.2 4.8 V15 L33 12.3 H30.6 Z" fill="#e6e2da"/>
    <path d="M38.2 7.3 Q39.6 10 38.2 12.7" fill="none" stroke="#e6e2da" stroke-width="1.3"/>
    <path d="M40.3 5.6 Q42.6 10 40.3 14.4" fill="none" stroke="#e6e2da" stroke-width="1.2"/>
    <path d="M42.6 3.8 Q45.8 10 42.6 16.2" fill="none" stroke="#bdb9b1" stroke-width="1"/>
  </svg>
  <svg class="a" style="left:849px;top:4px" width="16" height="11" viewBox="0 0 16 11">
    <rect x="0.5" y="0.8" width="14.5" height="9.4" rx="1" fill="#e6e2da"/>
    <path d="M1.8 2 L7.75 6.6 L13.7 2 M1.8 9 L5.8 5.2 M13.7 9 L9.7 5.2" fill="none" stroke="#55534e" stroke-width="0.8"/>
  </svg>
  <svg class="a" style="left:934px;top:2px" width="18" height="16" viewBox="0 0 18 16">
    <circle cx="8.4" cy="8" r="6.6" fill="#e6e2da"/><path d="M11 12 L15.5 14.5 L12.5 10.5Z" fill="#e6e2da"/>
    <path d="M6.3 5.9 L10.5 10.1 M10.5 5.9 L6.3 10.1" stroke="#3e3d39" stroke-width="1.4"/>
  </svg>
  <svg class="a" style="left:1003px;top:3px" width="15" height="14" viewBox="0 0 15 14">
    <path d="M4.2 3.6 A5.2 5.2 0 1 0 10 3.6" fill="none" stroke="#e6e2da" stroke-width="1.5"/>
    <path d="M7.1 0.8 V7" stroke="#e6e2da" stroke-width="1.5"/>
  </svg>
  <span class="pt" style="left:881px;font-size:11px;top:3px">1:58 PM</span>
  <span class="pt" style="left:954px;font-size:12px;top:2.5px">ubuntu</span>
</div>
<div id="botpanel" class="a">
  <svg class="a" style="left:0;top:-1px" width="24" height="20" viewBox="0 0 24 20">
    <rect x="1.5" y="3.5" width="12" height="12" fill="#a050b8" stroke="#5a3a60" stroke-width="1"/><rect x="2" y="4" width="11" height="2.5" fill="#f0e8c8"/>
    <path d="M3 8 h1.5 M3 10.5 h1.5 M3 13 h1.5" stroke="#e8d0f0" stroke-width="1"/>
    <path d="M18.5 7 v1 M18.5 10 v1 M18.5 13 v1" stroke="#6a6964" stroke-width="1"/>
  </svg>
  <div class="a" style="left:22px;top:0;width:162px;height:19px;border-left:1px solid #383733;border-right:1px solid #383733;background:linear-gradient(#55544f,#45443f 50%,#3a3935)"></div>
  <svg class="a" style="left:27px;top:1.5px" width="17" height="16" viewBox="0 0 21 19">
    <circle cx="10.4" cy="9.6" r="8.8" fill="url(#fxo)"/>
    <path d="M18.4 6.5 A8.6 8.6 0 0 1 16 16 L14 13 Z" fill="#f8c830"/>
    <circle cx="12.3" cy="7.4" r="5.6" fill="url(#fxb)"/>
    <path d="M4 3.5 C6 2.5 8 3 9.5 4.5 C8.5 6 8 8 9 10 C10 11.5 12 12 13.5 11.5 C12 13.5 9 14 7 12.5 C5 11 4 8 4 3.5Z" fill="#e86a1a"/>
  </svg>
  <div class="a" style="left:48px;top:2px;font-size:12px;letter-spacing:-.2px;color:#dfdbd2">Can anyone help me w...</div>
  <div class="a" style="left:185px;top:0;width:161px;height:19px;background:linear-gradient(#2e2d2a,#383733);border-right:1px solid #2a2926"></div>
  <svg class="a" style="left:190px;top:2px" width="15" height="14" viewBox="0 0 15 14"><rect x="1" y="1" width="13" height="11" fill="#111" stroke="#d8d8d4" stroke-width="1.2"/><path d="M3.5 4 L5.5 5.5 L3.5 7 M6 7.5 H8" stroke="#eee" stroke-width=".8" fill="none"/></svg>
  <div class="a" style="left:210px;top:2px;font-size:12px;color:#dfdbd2">ubuntu@ubuntu: ~</div>
  <div class="a" style="left:913px;top:0;width:22px;height:19px;background:#e0683a"></div>
  <div class="a" style="left:915px;top:2px;width:19px;height:16px;border:1px solid #fff0e8"></div>
  <svg class="a" style="left:917px;top:3px" width="16" height="14" viewBox="0 0 21 19">
    <circle cx="10.4" cy="9.6" r="8.8" fill="url(#fxo)"/>
    <circle cx="12.3" cy="7.4" r="5.6" fill="url(#fxb)"/>
    <path d="M4 3.5 C6 2.5 8 3 9.5 4.5 C8.5 6 8 8 9 10 C10 11.5 12 12 13.5 11.5 C12 13.5 9 14 7 12.5 C5 11 4 8 4 3.5Z" fill="#e86a1a"/>
  </svg>
  <div class="a" style="left:914px;top:0;width:10px;height:8px;background:#fca88a"></div>
  <div class="a" style="left:935px;top:0;width:67px;height:19px;background:#34332f"></div>
  <div class="a" style="left:957px;top:0;width:1px;height:19px;background:#44433f"></div>
  <div class="a" style="left:979px;top:0;width:1px;height:19px;background:#44433f"></div>
  <svg class="a" style="left:1005px;top:0" width="17" height="18" viewBox="0 0 17 18"><path d="M1.5 3.5 L3 16 Q8.5 18 14 16 L15.5 3.5" fill="#6a6964" stroke="#bdbcb7" stroke-width="1.2"/><ellipse cx="8.5" cy="3.5" rx="7" ry="2" fill="#8a8984" stroke="#d0cfca" stroke-width="1"/><path d="M4 6 L5 15 M8.5 6.5 V16 M13 6 L12 15" stroke="#7e7d78" stroke-width=".8"/></svg>
</div>
</body></html>
